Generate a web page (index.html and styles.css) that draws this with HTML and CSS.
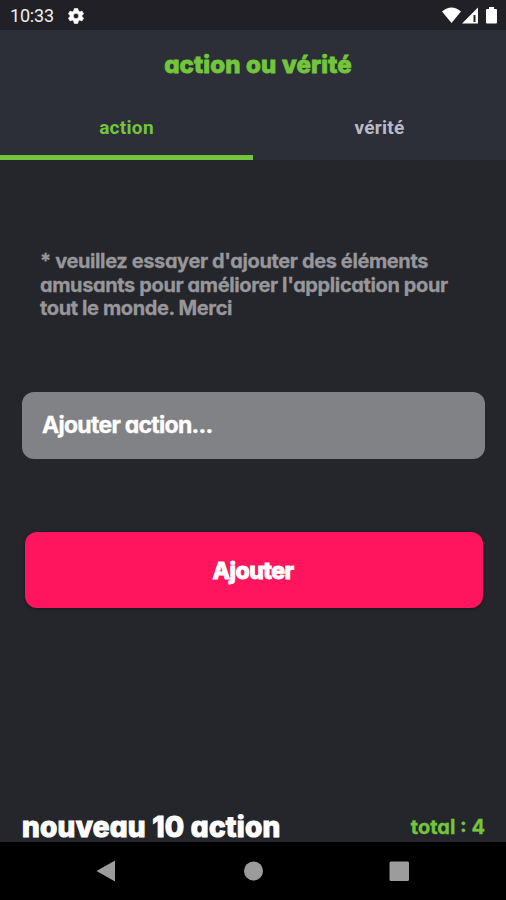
FILE: index.html
```html
<!DOCTYPE html>
<html lang="fr">
<head>
<meta charset="utf-8">
<title>action ou vérité</title>
<link rel="stylesheet" href="styles.css">
</head>
<body>
<div class="status">
  <span class="clock">10:33</span>
  <svg class="gear" viewBox="2 2 20 20"><path fill="#fff" stroke="#fff" stroke-width=".8" stroke-linejoin="round" fill-rule="evenodd" d="M19.400 13a7.500 7.500 0 0 0 0-2l2.100-1.600-2-3.500-2.500 1a7.500 7.500 0 0 0-1.700-1L14 2.500h-4l-.9 3.400a7.500 7.500 0 0 0-1.700 1l-2.900-1-2 3.500L4.600 11a7.500 7.500 0 0 0 0 2l-2.100 1.600 2 3.500 2.900-1a7.500 7.500 0 0 0 1.700 1l.9 3.400h4l.9-3.400a7.500 7.500 0 0 0 1.700-1l2.900 1 2-3.500zM12 8.600a3.400 3.400 0 1 1 0 6.800a3.400 3.400 0 0 1 0-6.800z"/></svg>
  <svg class="signals" viewBox="0 0 56 18"><g fill="#fff"><path d="M0 4.500Q9.500-3.500 19 4.500L9.500 16z"/><path fill-rule="evenodd" d="M20 16.500L36 .5v16zM31.500 8v7h2V8z"/><path d="M47 0h5v2h2q1 0 1 1v12.500q0 1-1 1h-9q-1 0-1-1V3q0-1 1-1h2z"/></g></svg>
</div>
<header class="header">
  <h1 class="round title">action ou vérité</h1>
  <nav class="tabs"><a class="tab active">action</a><a class="tab">vérité</a></nav>
</header>
<main class="content">
  <p class="round note">* veuillez essayer d'ajouter des éléments<br>amusants pour améliorer l'application pour<br>tout le monde. Merci</p>
  <div class="field"><span class="round hint">Ajouter action...</span></div>
  <div class="button"><span class="round label">Ajouter</span></div>
  <div class="summary"><span class="round count">nouveau 10 action</span><span class="round total">total : 4</span></div>
</main>
<footer class="nav">
  <svg viewBox="0 0 506 58"><g fill="#9c9c9c"><path d="M96.500 29L115 18.500v21z"/><circle cx="253.500" cy="29" r="9.500"/><rect x="389.500" y="19.500" width="19.500" height="19.500" rx="1.500"/></g></svg>
</footer>
</body>
</html>
```

FILE: styles.css
```css
* { box-sizing: border-box; }
body { margin: 0; width: 506px; height: 900px; overflow: hidden; display: flex; flex-direction: column; background: #25262b; font-family: Roboto, sans-serif; }
.status { height: 30px; background: #202026; display: flex; align-items: center; padding: 1px 8px 0 10px; }
.clock { color: #eee; font-size: 18px; width: 58px; letter-spacing: -.2px; }
.gear { width: 16px; height: 16px; }
.signals { width: 56px; height: 18px; margin-left: auto; }
.header { height: 130px; background: #2d2f38; display: flex; flex-direction: column; }
.round { font-family: Inter, sans-serif; font-feature-settings: "cv11"; font-weight: 700; white-space: nowrap; }
.title { margin: 0; height: 64px; padding: 3px 0 0 10px; text-align: center; color: #73c63b; font-size: 24px; font-weight: 800; line-height: 64px; letter-spacing: .15px; -webkit-text-stroke: .8px; }
.tabs { flex: 1; display: flex; }
.tab { flex: 1; text-align: center; padding-top: 22px; font-size: 19px; font-weight: 700; line-height: 24px; letter-spacing: .3px; color: #b9bbc4; border-bottom: 5px solid transparent; }
.active { color: #73c63b; border-color: #73c63b; }
.content { height: 682px; display: flex; flex-direction: column; padding: 89px 21px 0 22px; }
.content > * { flex-shrink: 0; }
.note { margin: 0 0 0 18px; height: 143px; padding-top: 1px; color: #97979b; font-size: 20px; line-height: 23.500px; letter-spacing: -.38px; -webkit-text-stroke: .3px; }
.field { height: 67px; border-radius: 12px; background: #818286; display: flex; align-items: center; padding: 0 0 2px 20px; color: #fff; }
.hint { font-size: 23px; letter-spacing: -.72px; -webkit-text-stroke: .4px; }
.button { height: 76px; margin: 73px 2px 0 3px; border-radius: 12px; background: #ff155d; box-shadow: 0 1px 3px #16161a; display: flex; align-items: center; justify-content: center; color: #fff; }
.label { font-size: 23px; font-weight: 800; letter-spacing: -.55px; padding: 2px 2px 0 0; -webkit-text-stroke: .8px; }
.summary { margin-top: 202px; height: 32px; padding-top: 2px; display: flex; align-items: center; justify-content: space-between; color: #fff; }
.count { font-size: 28px; line-height: 28px; font-weight: 800; letter-spacing: .25px; -webkit-text-stroke: 1px; }
.total { font-size: 20px; line-height: 24px; color: #73c63b; -webkit-text-stroke: .3px; }
.nav { height: 58px; background: #000; }
.nav svg { display: block; width: 506px; height: 58px; }
```
